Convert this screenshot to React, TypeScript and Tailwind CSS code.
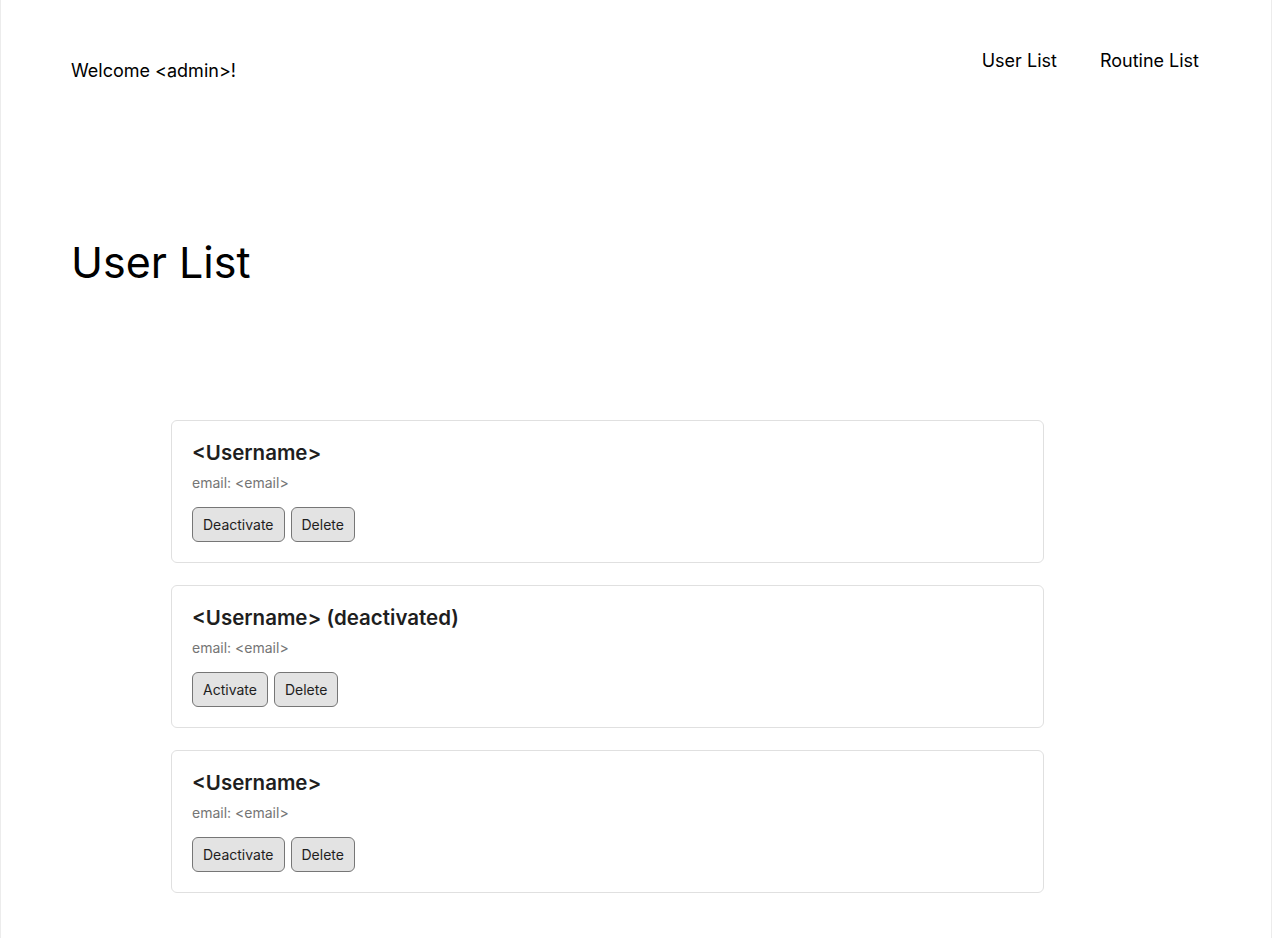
const users = [
  { name: "<Username>", email: "<email>", active: true },
  { name: "<Username> (deactivated)", email: "<email>", active: false },
  { name: "<Username>", email: "<email>", active: true },
];

function UserCard({ name, email, active }: { name: string; email: string; active: boolean }) {
  return (
    <div className="rounded-[6px] border border-[#e0e0e0] bg-white p-5">
      <h2 className="text-[20.5px] leading-[24px] font-semibold text-[#1e1e1e]">{name}</h2>
      <p className="mt-2 text-[14px] leading-[20px] text-[#757575]">email: {email}</p>
      <div className="mt-[14px] flex gap-[6px]">
        <button className="h-[35px] rounded-[6px] border border-[#767676] bg-[#e3e3e3] px-[10px] text-[14px] text-[#1e1e1e]">
          {active ? "Deactivate" : "Activate"}
        </button>
        <button className="h-[35px] rounded-[6px] border border-[#767676] bg-[#e3e3e3] px-[10px] text-[14px] text-[#1e1e1e]">
          Delete
        </button>
      </div>
    </div>
  );
}

export default function App() {
  return (
    <div
      className="min-h-[938px] w-[1272px] border-x border-[#ececec] bg-white text-black"
      style={{ fontFamily: "Inter, 'Noto Sans', sans-serif" }}
    >
      <header className="flex items-start justify-between pt-[49px] pl-[70px] pr-[72px]">
        <p className="mt-[10px] text-[18px] leading-[24px]">Welcome &lt;admin&gt;!</p>
        <nav className="flex gap-[43px] text-[18px] leading-[24px]">
          <a href="#">User List</a>
          <a href="#">Routine List</a>
        </nav>
      </header>

      <h1 className="mt-[150px] pl-[70px] text-[43px] leading-[58px] font-normal">User List</h1>

      <div className="mt-[129px] ml-[170px] flex w-[873px] flex-col gap-[22px] pb-[45px]">
        {users.map((u, i) => (
          <UserCard key={i} {...u} />
        ))}
      </div>
    </div>
  );
}
